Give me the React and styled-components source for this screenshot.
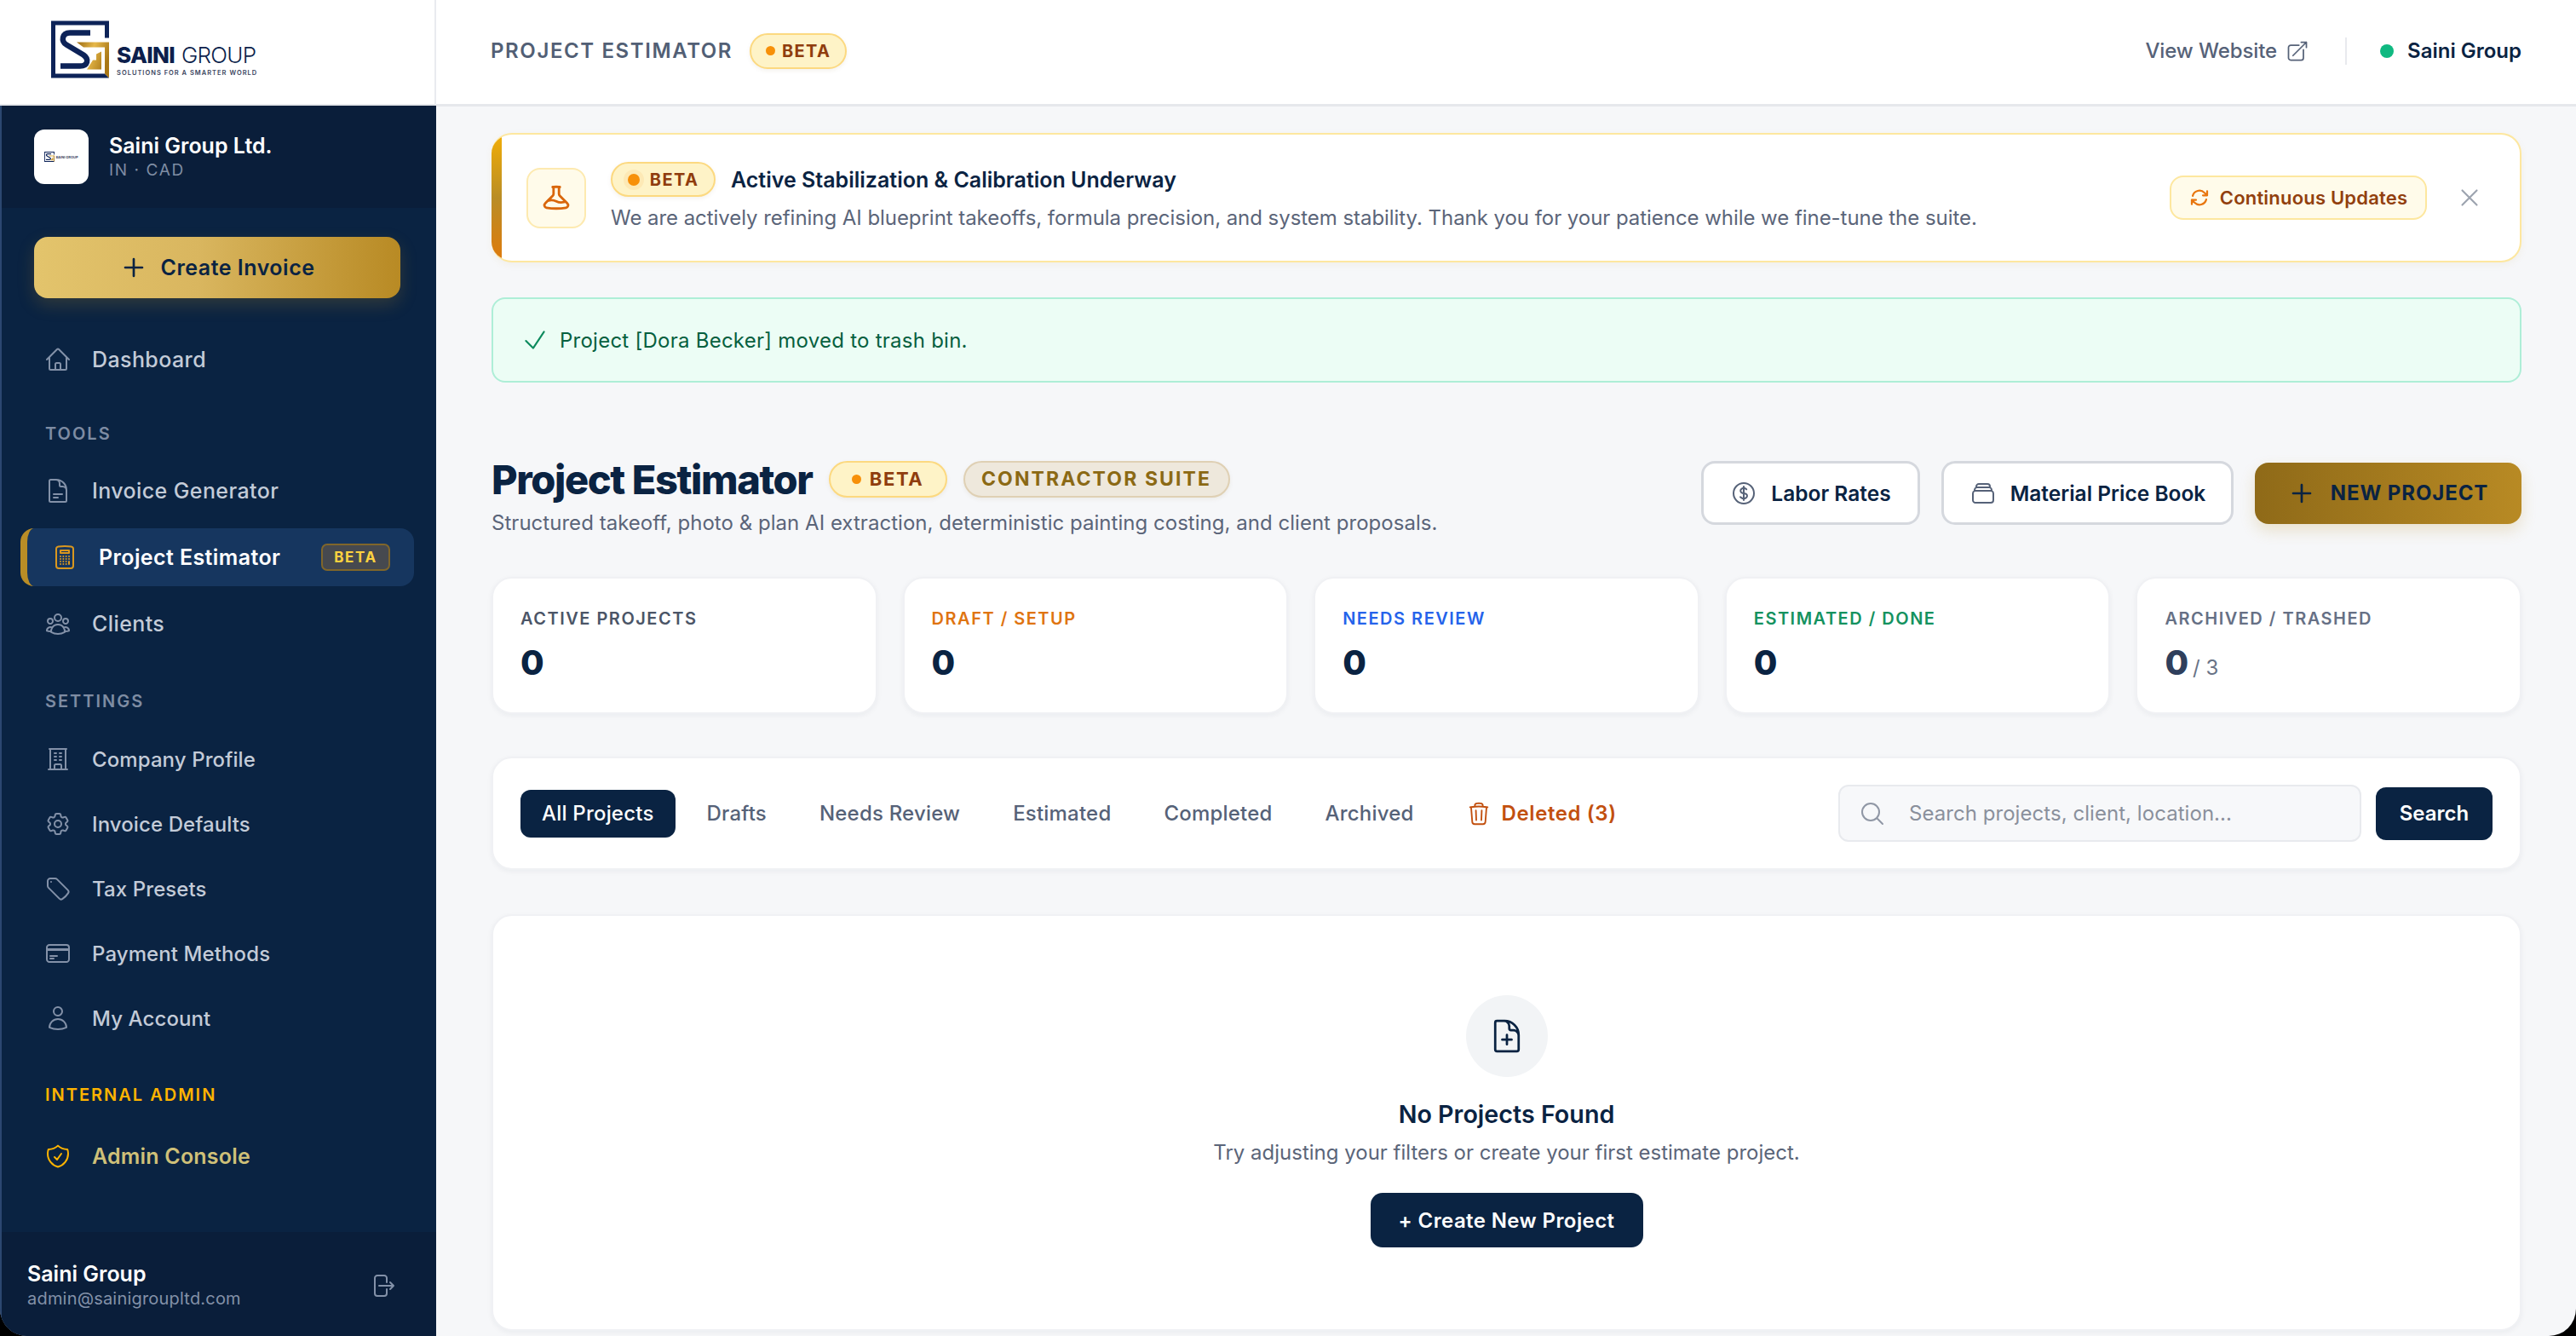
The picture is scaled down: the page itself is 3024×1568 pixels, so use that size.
import styled, { createGlobalStyle } from "styled-components";
import {
  HiOutlineHome,
  HiOutlineDocumentText,
  HiOutlineCalculator,
  HiOutlineUserGroup,
  HiOutlineBuildingOffice,
  HiOutlineCog6Tooth,
  HiOutlineTag,
  HiOutlineCreditCard,
  HiOutlineUser,
  HiOutlineShieldCheck,
  HiOutlineArrowRightOnRectangle,
  HiOutlinePlus,
  HiOutlineBeaker,
  HiOutlineArrowPath,
  HiOutlineArrowTopRightOnSquare,
  HiOutlineCheck,
  HiOutlineXMark,
  HiOutlineCurrencyDollar,
  HiOutlineRectangleStack,
  HiOutlineTrash,
  HiOutlineMagnifyingGlass,
  HiOutlineDocumentPlus,
} from "react-icons/hi2";

const NAVY = "#0a2342";

const GlobalStyle = createGlobalStyle`
    * { box-sizing: border-box; }
    html, body {
        margin: 0;
        background: #000;
        font-family: Inter, "Liberation Sans", sans-serif;
    }
`;

const Shell = styled.div`
    width: 3024px;
    height: 1568px;
    display: grid;
    grid-template-columns: 512px 1fr;
    overflow: hidden;
    background: #f6f7f9;
    border-radius: 0 0 32px 32px;
`;

const Sidebar = styled.aside`
    display: flex;
    flex-direction: column;
    height: 1568px;
`;

const LogoBar = styled.div`
    height: 124px;
    flex-shrink: 0;
    display: flex;
    align-items: flex-end;
    gap: 9px;
    padding: 0 0 30px 60px;
    background: #fff;
    border-right: 2px solid #e9ebef;
    border-bottom: 2px solid #e5e7eb;
`;

const LogoText = styled.div`
    color: #0d1f4c;
    padding-bottom: 2px;
`;

const LogoName = styled.div`
    font-size: 26px;
    line-height: 26px;
    font-weight: 300;
    letter-spacing: -0.7px;
    white-space: nowrap;

    b {
        font-weight: 800;
        margin-right: 8px;
    }
`;

const LogoTag = styled.div`
    margin-top: 3px;
    font-size: 7.5px;
    line-height: 9px;
    font-weight: 600;
    letter-spacing: 1px;
    color: #3a4560;
    white-space: nowrap;
`;

const SideBody = styled.div`
    flex: 1;
    display: flex;
    flex-direction: column;
    background: ${NAVY};
    border-left: 2px solid #2c4770;
`;

const CompanyBlock = styled.div`
    height: 120px;
    display: flex;
    align-items: center;
    gap: 24px;
    padding-left: 38px;
    background: #0a1e3a;
`;

const CompanyAvatar = styled.div`
    width: 64px;
    height: 64px;
    border-radius: 12px;
    background: #fff;
    display: flex;
    align-items: center;
    justify-content: center;
    gap: 1px;
`;

const MiniText = styled.span`
    font-size: 4px;
    font-weight: 700;
    color: #3a4560;
    white-space: nowrap;
`;

const CompanyName = styled.div`
    font-size: 25px;
    line-height: 30px;
    font-weight: 600;
    color: #fff;
`;

const CompanyMeta = styled.div`
    margin-top: 2px;
    font-size: 19px;
    line-height: 24px;
    color: #7f8da3;
    letter-spacing: 1.6px;
`;

const CreateInvoice = styled.button`
    margin: 34px 42px 0 38px;
    height: 72px;
    flex-shrink: 0;
    border: 0;
    border-radius: 16px;
    background: linear-gradient(90deg, #e3c46c, #d9b65f 45%, #b88a24);
    box-shadow: 0 8px 20px rgba(184, 138, 36, 0.22);
    color: ${NAVY};
    font: 600 25px Inter, sans-serif;
    letter-spacing: 0.5px;
    display: flex;
    align-items: center;
    justify-content: center;
    gap: 16px;
`;

const Nav = styled.nav`
    display: flex;
    flex-direction: column;
    gap: ${(p) => p.$gap || 8}px;
    margin-top: ${(p) => p.$top || 0}px;
`;

const NavItem = styled.div`
    height: 68px;
    width: 462px;
    margin-left: 22px;
    flex-shrink: 0;
    display: flex;
    align-items: center;
    gap: 24px;
    padding: 0 28px;
    border-radius: 16px;
    font-size: ${(p) => (p.$small ? 24 : 25)}px;
    font-weight: ${(p) => (p.$active || p.$gold ? 600 : 500)};
    letter-spacing: ${(p) => (p.$small ? 0.1 : p.$gold ? 0.2 : 0.4)}px;
    color: ${(p) => (p.$active ? "#fff" : p.$gold ? "#cfc078" : "#c3cbd8")};
    background: ${(p) => (p.$active ? "#16365f" : "transparent")};
    border-left: ${(p) => (p.$active ? "8px solid #b98d26" : "0")};

    svg {
        width: 32px;
        height: 32px;
        flex-shrink: 0;
        color: ${(p) => (p.$active ? "#d9971f" : p.$gold ? "#ffb400" : "#8391a8")};
    }
`;

const NavBadge = styled.span`
    margin-left: auto;
    width: 81px;
    height: 32px;
    border-radius: 7px;
    border: 2px solid #80662a;
    background: #46494f;
    color: #ffd23f;
    font-size: 17px;
    font-weight: 700;
    letter-spacing: 1.6px;
    display: flex;
    align-items: center;
    justify-content: center;
`;

const SectionLabel = styled.div`
    margin: ${(p) => p.$top}px 0 ${(p) => p.$bottom}px 51px;
    font-size: 20px;
    line-height: 28px;
    font-weight: 600;
    letter-spacing: 2px;
    color: ${(p) => p.$color || "#7e8ca3"};
`;

const SideFooter = styled.div`
    margin-top: auto;
    height: 122px;
    padding: 3px 47px 0 30px;
    display: flex;
    align-items: center;
    justify-content: space-between;
    background: #0a1e3a;
    color: #8391a8;

    svg {
        width: 32px;
        height: 32px;
    }
`;

const FooterName = styled.div`
    font-size: 25px;
    line-height: 30px;
    font-weight: 600;
    color: #fff;
`;

const FooterMail = styled.div`
    font-size: 20px;
    line-height: 28px;
    color: #8391a8;
    letter-spacing: 0.2px;
`;

const Main = styled.main`
    display: flex;
    flex-direction: column;
    min-width: 0;
`;

const TopBar = styled.header`
    height: 125px;
    flex-shrink: 0;
    display: flex;
    align-items: center;
    justify-content: space-between;
    padding: 0 64px 3px 64px;
    background: #fff;
    border-bottom: 3px solid #e6e8ec;
`;

const Crumb = styled.div`
    display: flex;
    align-items: center;
    gap: 20px;
`;

const CrumbTitle = styled.span`
    font-size: 24px;
    font-weight: 600;
    letter-spacing: 1.6px;
    color: #525f75;
`;

const TopRight = styled.div`
    display: flex;
    align-items: center;
`;

const SiteLink = styled.span`
    display: flex;
    align-items: center;
    gap: 10px;
    font-size: 24px;
    font-weight: 500;
    color: #566278;
    letter-spacing: -0.1px;

    svg {
        width: 28px;
        height: 28px;
    }
`;

const TopDivider = styled.span`
    width: 2px;
    height: 32px;
    margin: 0 39px 0 42px;
    background: #e8eaee;
`;

const UserChip = styled.span`
    display: flex;
    align-items: center;
    gap: 16px;
    font-size: 24px;
    font-weight: 600;
    color: ${NAVY};
`;

const OnlineDot = styled.span`
    width: 16px;
    height: 16px;
    border-radius: 50%;
    background: #10b981;
`;

const Pill = styled.span`
    display: inline-flex;
    align-items: center;
    justify-content: center;
    gap: ${(p) => p.$gap}px;
    width: ${(p) => p.$w}px;
    height: ${(p) => p.$h}px;
    flex-shrink: 0;
    border-radius: 999px;
    border: 2px solid ${(p) => p.$line || "#fcd980"};
    background: ${(p) => p.$bg || "#fef3c7"};
    color: ${(p) => p.$color || "#8f3d0e"};
    font-size: ${(p) => p.$size}px;
    font-weight: 700;
    letter-spacing: ${(p) => p.$track}px;
    box-shadow: 0 2px 5px rgba(120, 90, 20, 0.08);
`;

const PillDot = styled.span`
    width: ${(p) => p.$d}px;
    height: ${(p) => p.$d}px;
    border-radius: 50%;
    background: #f79009;
    box-shadow: ${(p) => (p.$glow ? "0 0 0 5px #fde9b5" : "none")};
`;

const Content = styled.div`
    padding: 31px 64px 0 65px;
    display: flex;
    flex-direction: column;
`;

const Banner = styled.section`
    height: 152px;
    display: flex;
    align-items: center;
    overflow: hidden;
    border: 2px solid #fde79f;
    border-left: 0;
    border-radius: 24px;
    background: #fff;
    box-shadow: 0 3px 8px rgba(180, 140, 40, 0.07);
`;

const BannerAccent = styled.span`
    width: 12px;
    align-self: stretch;
    margin: -2px 0;
    flex-shrink: 0;
    background: linear-gradient(180deg, #f3ae06, #b98d26 50%, #df7a0c);
`;

const BeakerBox = styled.div`
    width: 70px;
    height: 71px;
    margin: 0 29px;
    flex-shrink: 0;
    border-radius: 16px;
    border: 2px solid #fdeab0;
    background: #fffbea;
    color: #d9660b;
    display: flex;
    align-items: center;
    justify-content: center;

    svg {
        width: 34px;
        height: 34px;
    }
`;

const BannerText = styled.div`
    flex: 1;
    display: flex;
    flex-direction: column;
    gap: 7px;
`;

const BannerHead = styled.div`
    display: flex;
    align-items: center;
    gap: 18px;
`;

const BannerTitle = styled.span`
    font-size: 25px;
    font-weight: 600;
    color: ${NAVY};
`;

const BannerDesc = styled.p`
    margin: 0;
    font-size: 24px;
    line-height: 36px;
    letter-spacing: -0.05px;
    color: #5b6579;
`;

const UpdatesTag = styled.span`
    width: 302px;
    height: 52px;
    flex-shrink: 0;
    border-radius: 16px;
    border: 2px solid #fde79f;
    background: #fffbea;
    color: #92400e;
    font-size: 22px;
    font-weight: 600;
    letter-spacing: 0.2px;
    display: flex;
    align-items: center;
    justify-content: center;
    gap: 12px;

    svg {
        width: 24px;
        height: 24px;
        color: #e8760e;
    }
`;

const CloseBtn = styled.span`
    margin: 0 42px 0 33px;
    color: #9ca3af;
    display: flex;

    svg {
        width: 34px;
        height: 34px;
    }
`;

const SuccessBar = styled.div`
    height: 100px;
    margin-top: 41px;
    display: flex;
    align-items: center;
    gap: 12px;
    padding-left: 32px;
    border: 2px solid #aeeed7;
    border-radius: 16px;
    background: #ecfdf5;
    color: #06603f;
    font-size: 24px;
    letter-spacing: 0.25px;

    svg {
        width: 34px;
        height: 34px;
        color: #0c8a5d;
    }
`;

const PageHead = styled.div`
    height: 100px;
    margin-top: 83px;
    display: flex;
    justify-content: space-between;
`;

const TitleRow = styled.div`
    height: 60px;
    display: flex;
    align-items: center;
    gap: 19px;
`;

const PageTitle = styled.h1`
    margin: 0;
    font-size: 47px;
    font-weight: 800;
    letter-spacing: -1.4px;
    color: ${NAVY};
`;

const Subtitle = styled.p`
    margin: 4px 0 0;
    font-size: 24px;
    line-height: 36px;
    color: #5b6579;
    letter-spacing: 0.03px;
`;

const HeadActions = styled.div`
    display: flex;
    align-items: center;
    gap: 25px;
    height: 75px;
    margin-top: 9px;
`;

const GhostButton = styled.button`
    height: 75px;
    width: ${(p) => p.$w}px;
    border: 3px solid #d5d8de;
    border-radius: 16px;
    background: #fff;
    color: ${NAVY};
    font: 600 24.5px Inter, sans-serif;
    display: flex;
    align-items: center;
    justify-content: center;
    gap: 16px;

    svg {
        width: 32px;
        height: 32px;
        color: #566278;
    }
`;

const GoldButton = styled.button`
    height: 72px;
    width: 313px;
    border: 0;
    border-radius: 16px;
    background: linear-gradient(90deg, #8f6a18, #b88a24);
    box-shadow: 0 8px 18px rgba(184, 138, 36, 0.2);
    color: ${NAVY};
    font: 700 24px Inter, sans-serif;
    letter-spacing: 0.9px;
    display: flex;
    align-items: center;
    justify-content: center;
    gap: 18px;

    svg {
        width: 32px;
        height: 32px;
    }
`;

const StatGrid = styled.div`
    margin-top: 45px;
    display: grid;
    grid-template-columns: repeat(5, 1fr);
    gap: 30px;
`;

const StatCard = styled.div`
    height: 161px;
    padding: 33px 32px 0;
    border: 2px solid #f0f1f4;
    border-radius: 24px;
    background: #fff;
    box-shadow: 0 2px 6px rgba(20, 30, 50, 0.05);
`;

const StatLabel = styled.div`
    font-size: 20px;
    line-height: 28px;
    font-weight: 600;
    letter-spacing: 1.5px;
    color: ${(p) => p.$color};
`;

const StatValue = styled.div`
    margin-top: 12px;
    font-size: 40px;
    line-height: 52px;
    font-weight: 800;
    color: ${(p) => p.$color || NAVY};

    small {
        margin-left: 5px;
        font-size: 24px;
        font-weight: 400;
        color: #697386;
    }
`;

const FilterBar = styled.div`
    height: 133px;
    margin-top: 50px;
    padding: 0 32px 0 32px;
    display: flex;
    align-items: center;
    justify-content: space-between;
    border: 2px solid #f0f1f4;
    border-radius: 24px;
    background: #fff;
    box-shadow: 0 2px 6px rgba(20, 30, 50, 0.05);
`;

const Tabs = styled.div`
    display: flex;
    align-items: center;
    gap: 12px;
`;

const Tab = styled.span`
    height: 56px;
    padding: 0 ${(p) => (p.$danger ? "25px 0 24px" : "25px")};
    display: flex;
    align-items: center;
    gap: 12px;
    border-radius: 12px;
    font-size: 24px;
    font-weight: ${(p) => (p.$danger ? 600 : 500)};
    letter-spacing: ${(p) => (p.$danger ? 0.6 : 0.2)}px;
    color: ${(p) => (p.$active ? "#fff" : p.$danger ? "#c2500f" : "#566278")};
    background: ${(p) => (p.$active ? NAVY : "transparent")};

    svg {
        width: 30px;
        height: 30px;
    }
`;

const SearchRow = styled.div`
    display: flex;
    align-items: center;
    gap: 17px;
`;

const SearchField = styled.div`
    width: 614px;
    height: 67px;
    padding-left: 22px;
    display: flex;
    align-items: center;
    gap: 27px;
    border: 2px solid #e8eaee;
    border-radius: 12px;
    background: #f7f8fa;
    color: #8a909c;
    font-size: 24px;
    letter-spacing: 0.05px;

    svg {
        width: 32px;
        height: 32px;
        color: #9097a5;
    }
`;

const SearchButton = styled.button`
    width: 137px;
    height: 62px;
    border: 0;
    border-radius: 12px;
    background: ${NAVY};
    color: #fff;
    font: 600 24px Inter, sans-serif;
`;

const EmptyCard = styled.div`
    height: 489px;
    margin-top: 52px;
    padding-top: 93px;
    display: flex;
    flex-direction: column;
    align-items: center;
    border: 2px solid #f0f1f4;
    border-radius: 24px;
    background: #fff;
    box-shadow: 0 2px 6px rgba(20, 30, 50, 0.05);
`;

const EmptyIcon = styled.div`
    width: 96px;
    height: 96px;
    border-radius: 50%;
    background: #f2f4f6;
    color: ${NAVY};
    display: flex;
    align-items: center;
    justify-content: center;

    svg {
        width: 44px;
        height: 44px;
    }
`;

const EmptyTitle = styled.h3`
    margin: 24px 0 0;
    font-size: 28.7px;
    line-height: 40px;
    font-weight: 600;
    color: ${NAVY};
`;

const EmptyDesc = styled.p`
    margin: 7px 0 0;
    font-size: 24px;
    line-height: 36px;
    color: #5b6579;
`;

const CreateProject = styled.button`
    margin-top: 29px;
    width: 320px;
    height: 64px;
    border: 0;
    border-radius: 14px;
    background: ${NAVY};
    color: #fff;
    font: 600 24px Inter, sans-serif;
    letter-spacing: 0.4px;
`;

function LogoMark({ size }) {
    const id = `gold${size}`;
    return (
        <svg width={size} height={size} viewBox="0 0 68 67">
            <defs>
                <linearGradient id={id} x1="0" y1="0" x2="1" y2="0.4">
                    <stop offset="0" stopColor="#9a6a12" />
                    <stop offset="0.5" stopColor="#e6b84a" />
                    <stop offset="1" stopColor="#a87716" />
                </linearGradient>
            </defs>
            <path
                d="M0 0H68V20H63V5H5V62H63L68 67H0Z"
                fill="#0d2358"
            />
            <path
                d="M46 14H22C13 14 11 24 18 28L38 40C45 45 43 53 34 53H11"
                fill="none"
                stroke="#0d2358"
                strokeWidth="6.5"
            />
            <path
                d="M30 25H68V67L63 62V31H38Z M59 36V57H42L49 46H53V39Z"
                fill={`url(#${id})`}
            />
        </svg>
    );
}

const tabs = ["Drafts", "Needs Review", "Estimated", "Completed", "Archived"];

const stats = [
    { label: "ACTIVE PROJECTS", color: "#4b5567" },
    { label: "DRAFT / SETUP", color: "#df7410" },
    { label: "NEEDS REVIEW", color: "#2563eb" },
    { label: "ESTIMATED / DONE", color: "#14925f" },
];

function App() {
    return (
        <>
            <GlobalStyle />
            <Shell>
                <Sidebar>
                    <LogoBar>
                        <LogoMark size={68} />
                        <LogoText>
                            <LogoName>
                                <b>SAINI</b>GROUP
                            </LogoName>
                            <LogoTag>SOLUTIONS FOR A SMARTER WORLD</LogoTag>
                        </LogoText>
                    </LogoBar>
                    <SideBody>
                        <CompanyBlock>
                            <CompanyAvatar>
                                <LogoMark size={12} />
                                <MiniText>SAINI GROUP</MiniText>
                            </CompanyAvatar>
                            <div>
                                <CompanyName>Saini Group Ltd.</CompanyName>
                                <CompanyMeta>IN · CAD</CompanyMeta>
                            </div>
                        </CompanyBlock>
                        <CreateInvoice>
                            <HiOutlinePlus size={32} strokeWidth={2} />
                            Create Invoice
                        </CreateInvoice>
                        <Nav $top={38}>
                            <NavItem>
                                <HiOutlineHome />
                                Dashboard
                            </NavItem>
                        </Nav>
                        <SectionLabel $top={39} $bottom={19}>TOOLS</SectionLabel>
                        <Nav $gap={10}>
                            <NavItem>
                                <HiOutlineDocumentText />
                                Invoice Generator
                            </NavItem>
                            <NavItem $active>
                                <HiOutlineCalculator />
                                Project Estimator
                                <NavBadge>BETA</NavBadge>
                            </NavItem>
                            <NavItem>
                                <HiOutlineUserGroup />
                                Clients
                            </NavItem>
                        </Nav>
                        <SectionLabel $top={43} $bottom={20}>SETTINGS</SectionLabel>
                        <Nav>
                            <NavItem $small>
                                <HiOutlineBuildingOffice />
                                Company Profile
                            </NavItem>
                            <NavItem $small>
                                <HiOutlineCog6Tooth />
                                Invoice Defaults
                            </NavItem>
                            <NavItem $small>
                                <HiOutlineTag />
                                Tax Presets
                            </NavItem>
                            <NavItem $small>
                                <HiOutlineCreditCard />
                                Payment Methods
                            </NavItem>
                            <NavItem $small>
                                <HiOutlineUser />
                                My Account
                            </NavItem>
                        </Nav>
                        <SectionLabel $top={42} $bottom={24} $color="#ffb400">INTERNAL ADMIN</SectionLabel>
                        <Nav>
                            <NavItem $gold>
                                <HiOutlineShieldCheck />
                                Admin Console
                            </NavItem>
                        </Nav>
                        <SideFooter>
                            <div>
                                <FooterName>Saini Group</FooterName>
                                <FooterMail>admin@sainigroupltd.com</FooterMail>
                            </div>
                            <HiOutlineArrowRightOnRectangle />
                        </SideFooter>
                    </SideBody>
                </Sidebar>
                <Main>
                    <TopBar>
                        <Crumb>
                            <CrumbTitle>PROJECT ESTIMATOR</CrumbTitle>
                            <Pill $w={114} $h={42} $size={20} $track={1.4} $gap={8}>
                                <PillDot $d={11} />
                                BETA
                            </Pill>
                        </Crumb>
                        <TopRight>
                            <SiteLink>
                                View Website
                                <HiOutlineArrowTopRightOnSquare />
                            </SiteLink>
                            <TopDivider />
                            <UserChip>
                                <OnlineDot />
                                Saini Group
                            </UserChip>
                        </TopRight>
                    </TopBar>
                    <Content>
                        <Banner>
                            <BannerAccent />
                            <BeakerBox>
                                <HiOutlineBeaker strokeWidth={2} />
                            </BeakerBox>
                            <BannerText>
                                <BannerHead>
                                    <Pill $w={123} $h={41} $size={20} $track={1.4} $gap={12}>
                                        <PillDot $d={14} $glow />
                                        BETA
                                    </Pill>
                                    <BannerTitle>Active Stabilization &amp; Calibration Underway</BannerTitle>
                                </BannerHead>
                                <BannerDesc>
                                    We are actively refining AI blueprint takeoffs, formula precision, and system stability. Thank you for your patience while we fine-tune the suite.
                                </BannerDesc>
                            </BannerText>
                            <UpdatesTag>
                                <HiOutlineArrowPath strokeWidth={2.2} />
                                Continuous Updates
                            </UpdatesTag>
                            <CloseBtn>
                                <HiOutlineXMark />
                            </CloseBtn>
                        </Banner>
                        <SuccessBar>
                            <HiOutlineCheck />
                            Project [Dora Becker] moved to trash bin.
                        </SuccessBar>
                        <PageHead>
                            <div>
                                <TitleRow>
                                    <PageTitle>Project Estimator</PageTitle>
                                    <Pill $w={139} $h={43} $size={22} $track={1.6} $gap={10}>
                                        <PillDot $d={11} />
                                        BETA
                                    </Pill>
                                    <Pill $w={313} $h={43} $size={23} $track={2.1} $gap={0} $bg="#eee8dc" $line="#dfd0b4" $color="#8b6914">
                                        CONTRACTOR SUITE
                                    </Pill>
                                </TitleRow>
                                <Subtitle>
                                    Structured takeoff, photo &amp; plan AI extraction, deterministic painting costing, and client proposals.
                                </Subtitle>
                            </div>
                            <HeadActions>
                                <GhostButton $w={257}>
                                    <HiOutlineCurrencyDollar />
                                    Labor Rates
                                </GhostButton>
                                <GhostButton $w={343}>
                                    <HiOutlineRectangleStack />
                                    Material Price Book
                                </GhostButton>
                                <GoldButton>
                                    <HiOutlinePlus strokeWidth={2} />
                                    NEW PROJECT
                                </GoldButton>
                            </HeadActions>
                        </PageHead>
                        <StatGrid>
                            {stats.map((s) => (
                                <StatCard key={s.label}>
                                    <StatLabel $color={s.color}>{s.label}</StatLabel>
                                    <StatValue>0</StatValue>
                                </StatCard>
                            ))}
                            <StatCard>
                                <StatLabel $color="#667085">ARCHIVED / TRASHED</StatLabel>
                                <StatValue $color="#2f3f5c">
                                    0<small>/ 3</small>
                                </StatValue>
                            </StatCard>
                        </StatGrid>
                        <FilterBar>
                            <Tabs>
                                <Tab $active>All Projects</Tab>
                                {tabs.map((t) => (
                                    <Tab key={t}>{t}</Tab>
                                ))}
                                <Tab $danger>
                                    <HiOutlineTrash />
                                    Deleted (3)
                                </Tab>
                            </Tabs>
                            <SearchRow>
                                <SearchField>
                                    <HiOutlineMagnifyingGlass />
                                    Search projects, client, location...
                                </SearchField>
                                <SearchButton>Search</SearchButton>
                            </SearchRow>
                        </FilterBar>
                        <EmptyCard>
                            <EmptyIcon>
                                <HiOutlineDocumentPlus />
                            </EmptyIcon>
                            <EmptyTitle>No Projects Found</EmptyTitle>
                            <EmptyDesc>Try adjusting your filters or create your first estimate project.</EmptyDesc>
                            <CreateProject>+ Create New Project</CreateProject>
                        </EmptyCard>
                    </Content>
                </Main>
            </Shell>
        </>
    );
}

export default App;
